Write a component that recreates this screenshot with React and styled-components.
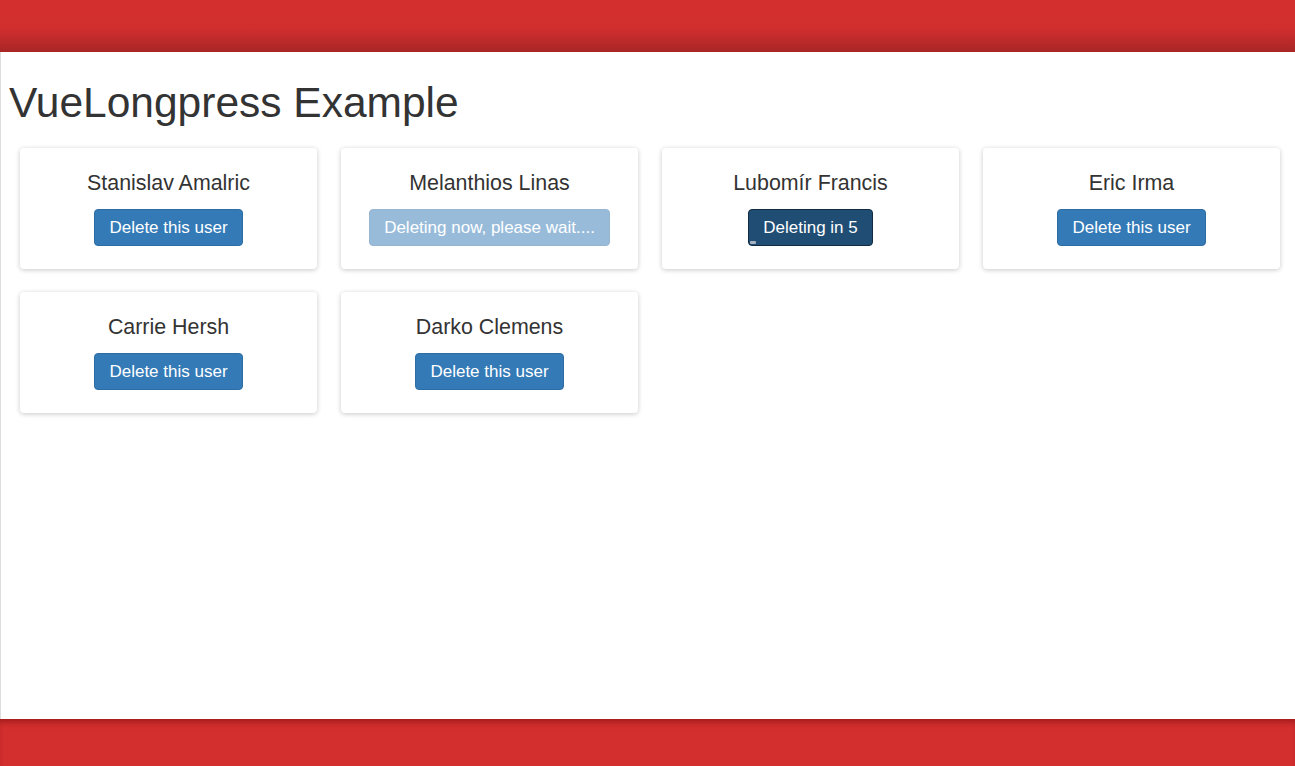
import React from 'react';
import styled, { createGlobalStyle } from 'styled-components';

const GlobalStyle = createGlobalStyle`
  html, body {
    margin: 0;
    padding: 0;
    background: #d32f2f;
    font-family: "Liberation Sans", Arial, sans-serif;
  }
`

const Page = styled.div`
  display: flex;
  flex-direction: column;
  height: 766px;
  overflow: hidden;
`

const TopBar = styled.div`
  height: 52px;
  flex: none;
  background: linear-gradient(to bottom, #d32f2f 0%, #d12e2e 55%, #a82626 100%);
`

const Main = styled.div`
  height: 667px;
  flex: none;
  background: #fff;
  border-left: 1px solid #dcdcdc;
  box-sizing: border-box;
  padding: 29px 17px 0 8px;
`

const BottomBar = styled.div`
  flex: 1;
  background: #d32f2f;
  box-shadow: inset 0 6px 6px -3px rgba(120, 10, 10, 0.55);
`

const Title = styled.h1`
  margin: 0 0 23px 0;
  font-size: 42.5px;
  line-height: 44px;
  font-weight: 400;
  color: #333;
`

const Grid = styled.div`
  display: grid;
  grid-template-columns: repeat(4, 297px);
  column-gap: 24px;
  row-gap: 23px;
  padding-left: 11px;
`

const Card = styled.div`
  height: 121px;
  box-sizing: border-box;
  background: #fff;
  border-radius: 4px;
  box-shadow: 0 1px 5px rgba(0, 0, 0, 0.22);
  display: flex;
  flex-direction: column;
  align-items: center;
  padding-top: 23px;
`

const Name = styled.div`
  font-size: 21.4px;
  line-height: 24px;
  color: #333;
  margin-bottom: 14px;
`

const Button = styled.button`
  position: relative;
  font-family: inherit;
  font-size: 17px;
  line-height: 23px;
  padding: 6px 14px;
  border-radius: 4px;
  color: #fff;
  border: 1px solid ${p => p.$variant === 'active' ? '#122b40' : '#2e6da4'};
  background: ${p => p.$variant === 'active' ? '#204d74' : '#337ab7'};
  opacity: ${p => p.$variant === 'busy' ? 0.5 : 1};
  cursor: pointer;
  overflow: hidden;
`

const Progress = styled.span`
  position: absolute;
  left: 1px;
  bottom: 1px;
  height: 3px;
  background: #a7b3bf;
  border-radius: 1px;
`

const users = [
  { name: 'Stanislav Amalric', state: 'idle' },
  { name: 'Melanthios Linas', state: 'busy' },
  { name: 'Lubomír Francis', state: 'active', countdown: 5, progress: 6 },
  { name: 'Eric Irma', state: 'idle' },
  { name: 'Carrie Hersh', state: 'idle' },
  { name: 'Darko Clemens', state: 'idle' },
];

const label = (u) => {
  if (u.state === 'busy') return 'Deleting now, please wait....';
  if (u.state === 'active') return `Deleting in ${u.countdown}`;
  return 'Delete this user';
}

const App = () => (
  <Page>
    <GlobalStyle />
    <TopBar />
    <Main>
      <Title>VueLongpress Example</Title>
      <Grid>
        {users.map((u, key) =>
          <Card key={key}>
            <Name>{u.name}</Name>
            <Button $variant={u.state}>
              {label(u)}
              {u.state === 'active' && <Progress style={{ width: u.progress + 'px' }} />}
            </Button>
          </Card>
        )}
      </Grid>
    </Main>
    <BottomBar />
  </Page>
);

export default App;
